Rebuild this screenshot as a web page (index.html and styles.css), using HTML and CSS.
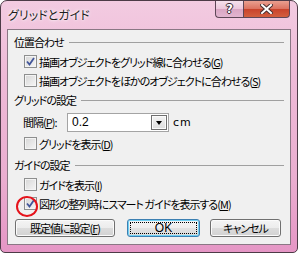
FILE: index.html
```html
<!DOCTYPE html>
<html lang="ja">
<head>
    <meta charset="UTF-8">
    <title>グリッドとガイド</title>
    <link rel="stylesheet" href="styles.css">
</head>
<body>
    <div class="window">
        <div class="titlebar">
            <span class="title">グリッドとガイド</span>
            <div class="caption-buttons">
                <div class="cap help">?</div>
                <div class="cap close">
                    <svg width="13" height="10" viewBox="0 0 13 10">
                        <path d="M2 1 L11 9 M11 1 L2 9" stroke="#4a3030" stroke-width="4" stroke-linecap="square"/>
                        <path d="M2 1 L11 9 M11 1 L2 9" stroke="#fff" stroke-width="2" stroke-linecap="square"/>
                    </svg>
                </div>
            </div>
        </div>

        <div class="client">
            <div class="group"><span>位置合わせ</span><i class="rule"></i></div>
            <div class="check-row">
                <span class="box checked"><svg width="11" height="11" viewBox="0 0 11 11"><path d="M2 5.5 L4.5 8.5 L9 2" fill="none" stroke="#42569a" stroke-width="1.8"/></svg></span>
                <span class="text">描画オブジェクトをグリッド線に合わせる(<u>G</u>)</span>
            </div>
            <div class="check-row">
                <span class="box"></span>
                <span class="text">描画オブジェクトをほかのオブジェクトに合わせる(<u>S</u>)</span>
            </div>

            <div class="group"><span>グリッドの設定</span><i class="rule"></i></div>
            <div class="spacing-row">
                <span class="spacing-label">間隔(<u>P</u>):</span>
                <div class="combo">
                    <span class="combo-value">0.2</span>
                    <span class="combo-button"><i class="arrow"></i></span>
                </div>
                <span class="unit">cm</span>
            </div>
            <div class="check-row">
                <span class="box"></span>
                <span class="text">グリッドを表示(<u>D</u>)</span>
            </div>

            <div class="group guide-group"><span>ガイドの設定</span><i class="rule"></i></div>
            <div class="check-row">
                <span class="box"></span>
                <span class="text">ガイドを表示(<u>I</u>)</span>
            </div>
            <div class="check-row">
                <span class="box checked marked"><svg width="11" height="11" viewBox="0 0 11 11"><path d="M2 5.5 L4.5 8.5 L9 2" fill="none" stroke="#42569a" stroke-width="1.8"/></svg></span>
                <span class="text">図形の整列時にスマート ガイドを表示する(<u>M</u>)</span>
            </div>

            <div class="button-row">
                <div class="button default-btn">既定値に設定(<u>F</u>)</div>
                <div class="button ok-btn"><span class="focus">OK</span></div>
                <div class="button cancel-btn">キャンセル</div>
            </div>
        </div>
    </div>
</body>
</html>
```

FILE: styles.css
```css
body {
    margin: 0;
    background: #fff;
    font-family: "Noto Sans CJK JP", sans-serif;
    font-size: 11px;
    letter-spacing: -1px;
    color: #000;
    font-feature-settings: "palt";
}

.window {
    width: 298px;
    height: 253px;
    box-sizing: border-box;
    border: 1px solid #4d3b47;
    border-radius: 7px 7px 5px 5px;
    background: linear-gradient(#f3cbe1, #eebad7 30%, #eaaed0 70%, #e596c5);
    display: flex;
    flex-direction: column;
    padding: 0 6px 7px 6px;
    overflow: hidden;
}

.titlebar {
    height: 28px;
    display: flex;
    align-items: flex-start;
}

.title {
    margin: 6px 0 0 1px;
    font-size: 12px;
    letter-spacing: 0;
    line-height: 16px;
    color: #1e1e1e;
    text-shadow: 0 0 4px #fff, 0 0 2px #fff;
}

.caption-buttons {
    margin-left: auto;
    margin-top: -1px;
    margin-right: 1px;
    display: flex;
}

.cap {
    height: 18px;
    box-sizing: border-box;
    border: 1px solid #5e4757;
    border-top: none;
    display: flex;
    align-items: center;
    justify-content: center;
}

.help {
    width: 28px;
    border-right: none;
    border-radius: 0 0 0 4px;
    background: linear-gradient(#f6e4ee, #ecc8dc 50%, #d9a5c3 51%, #e2b5cf);
    font-family: "DejaVu Sans", sans-serif;
    font-weight: bold;
    font-size: 12px;
    letter-spacing: 0;
    color: #fff;
    text-shadow: 0 0 1px #3a2a35, 1px 0 0 #3a2a35, -1px 0 0 #3a2a35, 0 1px 0 #3a2a35, 0 -1px 0 #3a2a35;
}

.close {
    width: 47px;
    border-radius: 0 0 4px 0;
    background: linear-gradient(#eba596, #dc7462 50%, #c8412a 51%, #d35f3f);
}

.client {
    flex: 1;
    background: #f0f0f0;
    border: 1px solid #8a7784;
    padding: 2px 6px 0 6px;
    display: flex;
    flex-direction: column;
}

.group {
    height: 20px;
    display: flex;
    align-items: center;
    gap: 5px;
}

.guide-group {
    margin-top: 2px;
}

.rule {
    flex: 1;
    height: 1px;
    background: #a0a0a0;
}

.check-row {
    height: 19px;
    display: flex;
    align-items: center;
    padding-left: 10px;
}

.text {
    white-space: nowrap;
}

.box {
    width: 13px;
    height: 13px;
    box-sizing: border-box;
    margin-right: 2px;
    border: 1px solid #8e8f8f;
    background: linear-gradient(135deg, #d6d6d6, #f6f6f6);
    box-shadow: inset 0 0 0 1px #f4f4f4;
    display: flex;
    align-items: center;
    justify-content: center;
    position: relative;
    flex: none;
}

.marked::after {
    content: "";
    position: absolute;
    left: -9px;
    top: -2px;
    width: 22px;
    height: 21px;
    box-sizing: border-box;
    border: 2px solid #e5131b;
    border-radius: 50%;
}

.spacing-row {
    height: 24px;
    display: flex;
    align-items: center;
    padding-left: 9px;
}

.spacing-label {
    width: 44px;
    white-space: nowrap;
}

.combo {
    width: 102px;
    height: 19px;
    box-sizing: border-box;
    border: 1px solid #a4a4a4;
    background: #fff;
    display: flex;
    align-items: center;
    padding: 1px;
}

.combo-value {
    flex: 1;
    padding-left: 3px;
    font-family: "Liberation Sans", sans-serif;
    font-size: 12px;
    letter-spacing: 0;
}

.combo-button {
    width: 16px;
    height: 15px;
    box-sizing: border-box;
    border: 1px solid #6f6f6f;
    background: linear-gradient(#f3f3f3, #dedede);
    box-shadow: inset 0 0 0 1px #fbfbfb;
    display: flex;
    align-items: center;
    justify-content: center;
}

.arrow {
    width: 0;
    height: 0;
    margin-top: 2px;
    border-left: 3.5px solid transparent;
    border-right: 3.5px solid transparent;
    border-top: 4px solid #000;
}

.unit {
    margin-left: 4px;
    font-family: "DejaVu Sans", sans-serif;
    font-size: 11px;
    letter-spacing: 1px;
}

.button-row {
    margin-top: 6px;
    padding-left: 1px;
    display: flex;
}

.button {
    height: 18px;
    box-sizing: border-box;
    border: 1px solid #707070;
    border-radius: 3px;
    background: linear-gradient(#f4f4f4, #ececec 50%, #dcdcdc 51%, #d2d2d2);
    box-shadow: inset 0 0 0 1px #fbfbfb;
    display: flex;
    align-items: center;
    justify-content: center;
    white-space: nowrap;
}

.default-btn {
    width: 100px;
}

.ok-btn {
    width: 73px;
    margin-left: 12px;
    border-color: #3c7fb1;
    background: linear-gradient(#f5f5f5, #eeeeee 50%, #e2e2e2 51%, #dadada);
    box-shadow: inset 0 0 0 1px #6fd0f4;
    padding: 2px;
}

.focus {
    flex: 1;
    align-self: stretch;
    border: 1px dotted #000;
    display: flex;
    align-items: center;
    justify-content: center;
    font-family: "Liberation Sans", sans-serif;
    font-size: 12px;
    letter-spacing: 0;
}

.cancel-btn {
    width: 71px;
    margin-left: 10px;
}
```
